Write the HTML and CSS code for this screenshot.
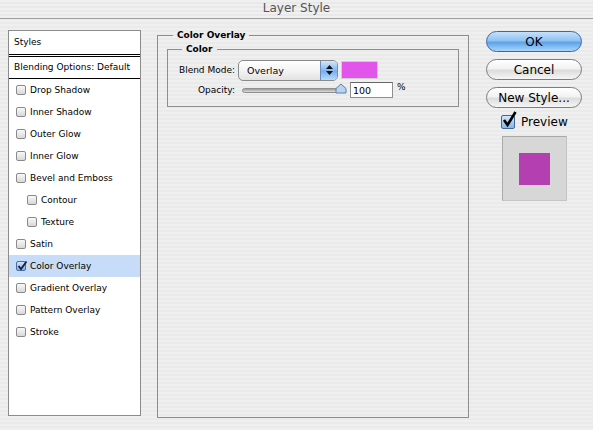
FILE: index.html
```html
<!DOCTYPE html>
<html lang="en">
<head>
<meta charset="UTF-8">
<title>Layer Style</title>
<link rel="stylesheet" href="styles.css">
</head>
<body>
<div class="titlebar">Layer Style</div>

<div class="dialog">
  <div class="styles-list">
    <div class="list-head">Styles</div>
    <div class="list-blend">Blending Options: Default</div>
    <div class="list-item"><span class="box"></span>Drop Shadow</div>
    <div class="list-item"><span class="box"></span>Inner Shadow</div>
    <div class="list-item"><span class="box"></span>Outer Glow</div>
    <div class="list-item"><span class="box"></span>Inner Glow</div>
    <div class="list-item"><span class="box"></span>Bevel and Emboss</div>
    <div class="list-item sub"><span class="box"></span>Contour</div>
    <div class="list-item sub"><span class="box"></span>Texture</div>
    <div class="list-item"><span class="box"></span>Satin</div>
    <div class="list-item selected">
      <span class="box on">
        <svg width="12" height="12" viewBox="0 0 12 12"><path d="M2.5 6 L5 9 L10.5 1.5" fill="none" stroke="#1b1b3a" stroke-width="1.8"/></svg>
      </span>Color Overlay
    </div>
    <div class="list-item"><span class="box"></span>Gradient Overlay</div>
    <div class="list-item"><span class="box"></span>Pattern Overlay</div>
    <div class="list-item"><span class="box"></span>Stroke</div>
  </div>

  <fieldset class="group">
    <legend>Color Overlay</legend>
    <fieldset class="subgroup">
      <legend>Color</legend>
      <div class="form-row">
        <label>Blend Mode:</label>
        <div class="popup">
          <span class="popup-text">Overlay</span>
          <span class="popup-arrows">
            <svg width="9" height="12" viewBox="0 0 9 12"><path d="M4.5 1 L8 5 H1 Z M4.5 11 L8 7 H1 Z" fill="#111"/></svg>
          </span>
        </div>
        <span class="swatch"></span>
      </div>
      <div class="form-row">
        <label>Opacity:</label>
        <div class="slider">
          <div class="track"></div>
          <svg class="thumb" width="12" height="11" viewBox="0 0 12 11"><path d="M1 10 V5.5 L6 1 L11 5.5 V10 Z" fill="#b9d3ee" stroke="#5c7ea6"/></svg>
        </div>
        <input class="num" type="text" value="100">
        <span class="unit">%</span>
      </div>
    </fieldset>
  </fieldset>

  <div class="actions">
    <button class="btn primary">OK</button>
    <button class="btn">Cancel</button>
    <button class="btn">New Style...</button>
    <div class="preview-toggle">
      <span class="bigbox">
        <svg width="18" height="18" viewBox="0 0 18 18"><path d="M4 9 L7.5 14 L15.5 1" fill="none" stroke="#000" stroke-width="2.6"/></svg>
      </span>Preview
    </div>
    <div class="preview">
      <div class="preview-swatch"></div>
    </div>
  </div>
</div>
</body>
</html>
```

FILE: styles.css
```css
body {
  margin: 0;
  width: 593px;
  height: 430px;
  overflow: hidden;
  font-family: "DejaVu Sans", sans-serif;
  font-size: 9px;
  color: #000;
  background: repeating-linear-gradient(#efefef 0 2px, #eaeaea 2px 4px);
}

.titlebar {
  height: 18px;
  line-height: 17px;
  text-align: center;
  font-size: 12px;
  color: #555;
  border-bottom: 1px solid #a0a0a0;
  background: repeating-linear-gradient(#f0f0f0 0 2px, #e9e9e9 2px 4px);
}

.dialog {
  display: flex;
  align-items: flex-start;
  padding: 11px 0 0 8px;
}

/* left: list of effects */
.styles-list {
  width: 131px;
  height: 384px;
  border: 1px solid #8c8c8c;
  background: #fff;
}

.list-head {
  height: 23px;
  line-height: 23px;
  padding-left: 5px;
  border-bottom: 3px double #000;
}

.list-blend {
  height: 21px;
  line-height: 21px;
  padding-left: 5px;
  border-bottom: 1px solid #000;
}

.list-item {
  display: flex;
  align-items: center;
  height: 22px;
  padding-left: 7px;
}

.list-item.sub {
  padding-left: 18px;
}

.list-item.selected {
  background: #c6dcf8;
}

.box {
  width: 8px;
  height: 8px;
  margin-right: 4px;
  border: 1px solid #8a8a8a;
  border-radius: 2px;
  background: linear-gradient(#f8f8f8, #d8d8d8);
  position: relative;
}

.box.on {
  border-color: #4a6f9e;
  background: linear-gradient(#cfe3fb, #7eb1ea);
}

.box svg {
  position: absolute;
  left: -1px;
  top: -2px;
}

/* middle: settings */
.group {
  width: 292px;
  height: 382px;
  margin: 0 0 0 16px;
  padding: 4px 9px 0 9px;
  border: 1px solid #8e8e8e;
}

.group legend {
  font-weight: bold;
  padding: 0 4px;
  margin-left: 6px;
}

.subgroup {
  margin: 0;
  height: 55px;
  padding: 6px 0 0 0;
  border: 1px solid #8e8e8e;
}

.subgroup legend {
  font-weight: bold;
  padding: 0 4px;
  margin-left: 14px;
}

.form-row {
  display: flex;
  align-items: center;
  height: 20px;
}

.form-row label {
  width: 67px;
  text-align: right;
  margin-right: 3px;
}

.popup {
  display: flex;
  width: 98px;
  height: 19px;
  border: 1px solid #8a8a8a;
  border-radius: 5px;
  background: linear-gradient(#fff, #f1f1f1 60%, #e2e2e2);
  overflow: hidden;
}

.popup-text {
  flex: 1;
  padding-left: 8px;
  line-height: 19px;
  font-size: 9.5px;
}

.popup-arrows {
  width: 16px;
  display: flex;
  align-items: center;
  justify-content: center;
  border-left: 1px solid #6a8fbd;
  background: linear-gradient(#d4e6fb, #7ab1ee 55%, #b9dafc);
}

.swatch {
  width: 35px;
  height: 16px;
  margin-left: 3px;
  background: #e155ea;
  border: 1px solid #cfcfcf;
}

.slider {
  position: relative;
  width: 107px;
  height: 16px;
  margin-left: 2px;
}

.track {
  position: absolute;
  left: 2px;
  right: 2px;
  top: 6px;
  height: 3px;
  border: 1px solid #8f8f8f;
  border-radius: 3px;
  background: linear-gradient(#9a9a9a, #dedede);
}

.thumb {
  position: absolute;
  right: 0;
  top: 1px;
}

.num {
  width: 37px;
  height: 12px;
  margin-left: 3px;
  padding: 1px 2px;
  border: 1px solid #8f8f8f;
  border-top-color: #666;
  font-family: inherit;
  font-size: 9.5px;
}

.unit {
  margin-left: 4px;
  align-self: flex-start;
  margin-top: 2px;
}

/* right: buttons and preview */
.actions {
  display: flex;
  flex-direction: column;
  width: 96px;
  margin-left: 17px;
  margin-top: 1px;
}

.btn {
  height: 21px;
  margin-bottom: 7px;
  border: 1px solid #7d7d7d;
  border-radius: 11px;
  font-family: inherit;
  font-size: 12px;
  color: #000;
  background: linear-gradient(#fff, #f2f2f2 45%, #dcdcdc 55%, #f6f6f6);
  padding: 0;
}

.btn.primary {
  border-color: #3c69a3;
  background: linear-gradient(#c6e0fa, #8ec2f3 45%, #5ea3e8 55%, #a9d4fb);
}

.preview-toggle {
  display: flex;
  align-items: center;
  height: 16px;
  margin-top: -1px;
  padding-left: 15px;
  font-size: 12px;
}

.bigbox {
  position: relative;
  width: 12px;
  height: 12px;
  margin-right: 6px;
  border: 1px solid #44679a;
  border-radius: 2px;
  background: linear-gradient(#d5e7fb, #83b6ec);
}

.bigbox svg {
  position: absolute;
  left: -2px;
  top: -5px;
}

.preview {
  width: 65px;
  height: 65px;
  margin: 6px 0 0 16px;
  box-sizing: border-box;
  border: 1px solid #c4c4c4;
  border-top-color: #a9a9a9;
  border-left-color: #a9a9a9;
  background: #d7d7d7;
  display: flex;
  align-items: center;
  justify-content: center;
}

.preview-swatch {
  width: 31px;
  height: 32px;
  background: #b43fb0;
}
```
